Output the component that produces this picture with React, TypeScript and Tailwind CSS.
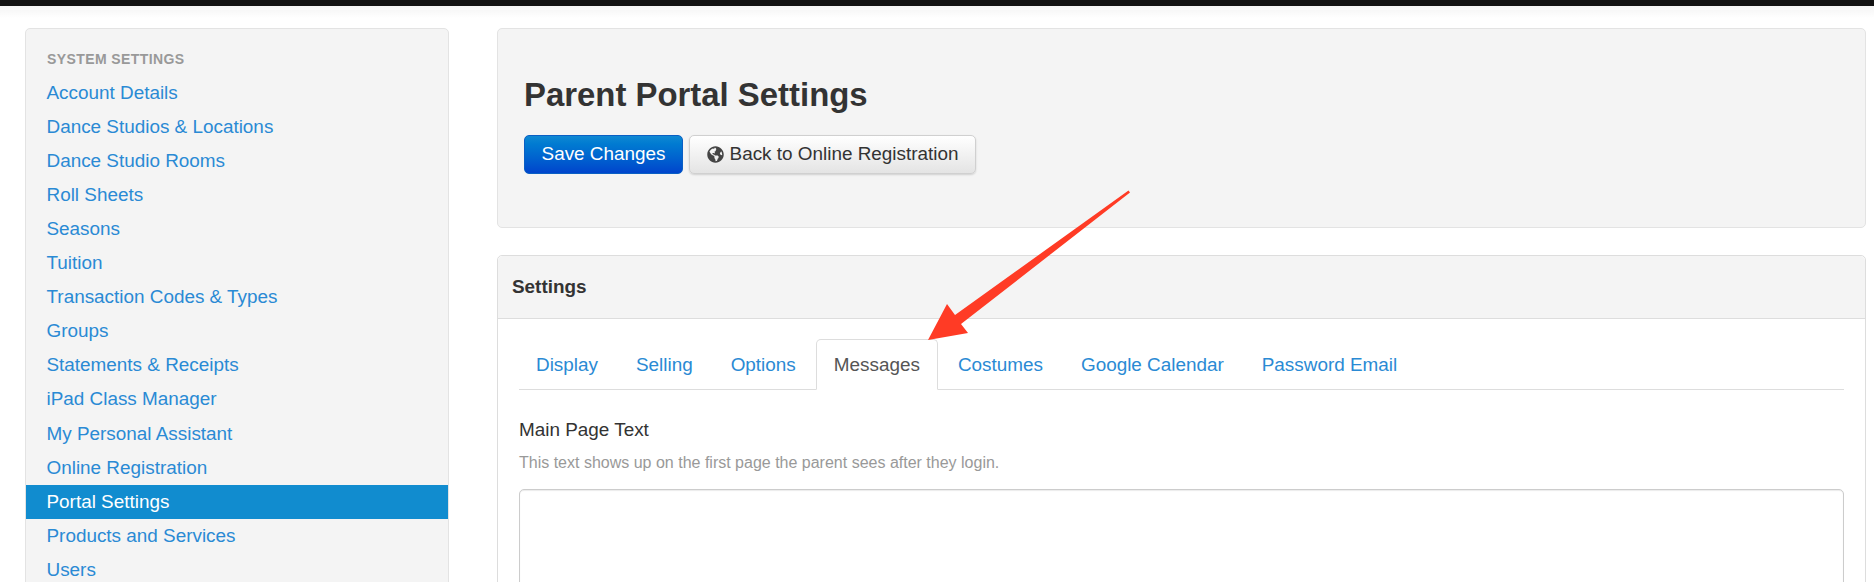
import React from "react";
import { FaGlobeAmericas } from "react-icons/fa";
const items = ["Account Details","Dance Studios & Locations","Dance Studio Rooms","Roll Sheets","Seasons","Tuition","Transaction Codes & Types","Groups","Statements & Receipts","iPad Class Manager","My Personal Assistant","Online Registration","Portal Settings","Products and Services","Users"];
const tabs = ["Display","Selling","Options","Messages","Costumes","Google Calendar","Password Email"];
export default function App(){
 return <div className="h-[582px] w-[1874px] overflow-hidden bg-white relative text-[#333] font-['Liberation_Sans',Arial,sans-serif]">
  <div className="h-[6px] bg-[#111]"/>
  <div className="h-[12px] bg-gradient-to-b from-[#f4f4f4] to-white"/>
  <div className="flex gap-[48px] pl-[25px] pr-[8px] pt-[10px] items-start">
   <aside className="w-[424px] shrink-0 bg-[#f4f4f4] border border-[#e3e3e3] rounded-[5px] pt-[20px] h-[600px]">
    <div className="text-[14px] tracking-[0.4px] font-bold text-[#999] pl-[21px] leading-[20px] mb-[8px]">SYSTEM SETTINGS</div>
    {items.map((t,i)=><a key={t} className={"block h-[34px] pl-[20.5px] text-[18.9px] "+(i<10?"leading-[32px] ":"leading-[33px] ")+(t==="Portal Settings"?"bg-[#118ccf] text-white":"text-[#2a8ad4]")}>{t}</a>)}
   </aside>
   <main className="flex-1 min-w-0">
    <div className="h-[200px] bg-[#f4f4f4] border border-[#e3e3e3] rounded-[5px] px-[26px] pt-[44px]">
     <h1 className="text-[32.9px] font-bold leading-[44px] text-[#333]">Parent Portal Settings</h1>
     <div className="flex gap-[6px] mt-[18px]">
      <button className="h-[39px] w-[159px] text-[18.9px] text-white rounded-[5px] bg-gradient-to-b from-[#0f88d2] to-[#0044cc] border border-[#0a5fc4]">Save Changes</button>
      <button className="h-[39px] w-[287px] flex items-center justify-center gap-[6px] text-[18.9px] text-[#333] rounded-[5px] bg-gradient-to-b from-white to-[#e4e4e4] border border-[#d0d0d0] shadow-[0_1px_2px_rgba(0,0,0,0.15)]"><FaGlobeAmericas className="text-[#444] w-[17px] h-[17px]"/>Back to Online Registration</button>
     </div>
    </div>
    <div className="mt-[27px] border border-[#ddd] rounded-[5px] h-[400px]">
     <div className="h-[63px] bg-[#f4f4f4] border-b border-[#ddd] rounded-t-[5px] px-[14px] leading-[62px] text-[18.9px] font-bold">Settings</div>
     <div className="px-[21px] pt-[20px]">
      <div className="flex border-b border-[#ddd] h-[51px]">
       {tabs.map((t,i)=><div key={t} className={"px-[17px] mr-[2px] border leading-[49px] text-[18.9px] "+(i===0?"-ml-[1px] ":"")+(t==="Messages"?"bg-white border-[#ddd] border-b-white rounded-t-[5px] h-[51px] text-[#555]":"border-transparent text-[#2a8ad4]")}>{t}</div>)}
      </div>
      <div className="text-[18.9px] mt-[28px] leading-[24px]">Main Page Text</div>
      <div className="text-[16px] text-[#999] mt-[10px] leading-[22px]">This text shows up on the first page the parent sees after they login.</div>
      <div className="mt-[15px] h-[200px] border border-[#ccc] rounded-[5px] shadow-[inset_0_1px_1px_rgba(0,0,0,0.08)]"/>
     </div>
    </div>
   </main>
  </div>
  <svg className="absolute left-0 top-0 pointer-events-none" width="1874" height="582" viewBox="0 0 1874 582"><polygon points="1128.5,190.5 1130,192.5 961,324 968,333 928,340 947,304 955,315" fill="#ff3b25"/></svg>
 </div>;
}
